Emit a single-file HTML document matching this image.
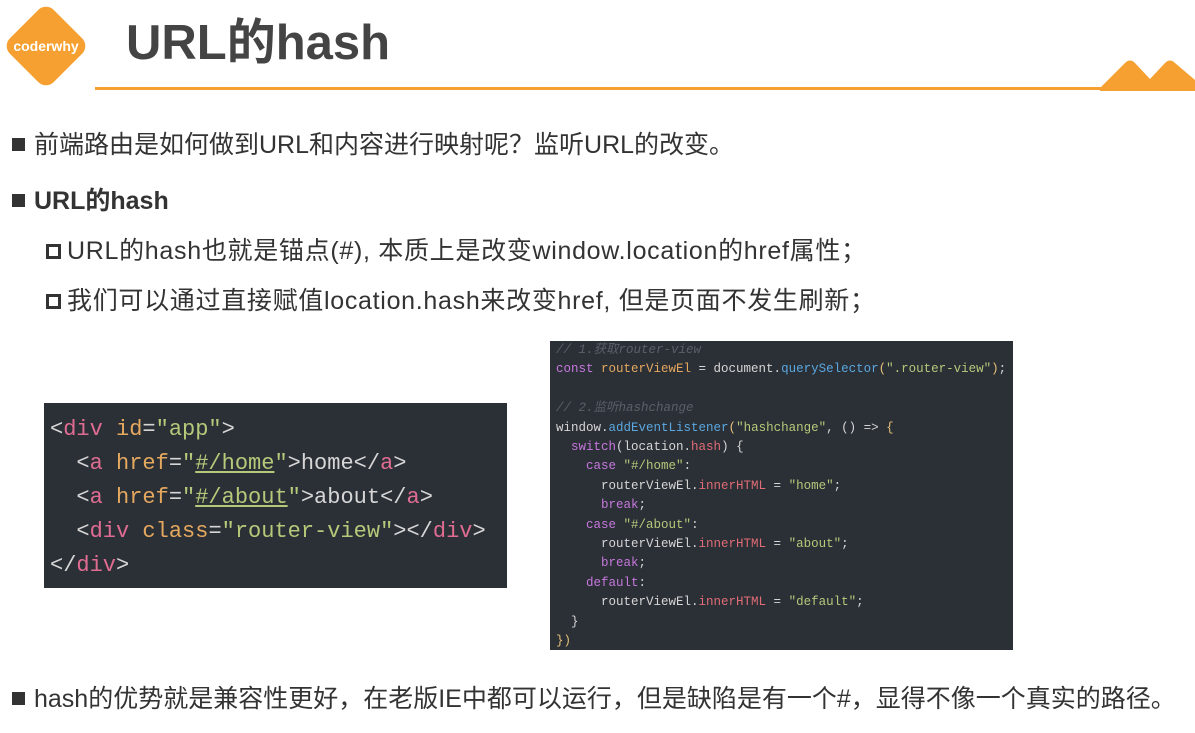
<!DOCTYPE html>
<html><head><meta charset="utf-8"><style>
*{margin:0;padding:0;box-sizing:border-box}
body{width:1195px;height:733px;background:#fff;position:relative;overflow:hidden;font-family:"Liberation Sans","Noto Sans CJK SC",sans-serif;color:#333}
.abs{position:absolute;white-space:nowrap}
.t{font-size:25px;line-height:28px}
.sq{display:inline-block;width:13px;height:13px;background:#333;margin-right:9px;vertical-align:2px}
.sq2{display:inline-block;width:15px;height:15px;border:3px solid #333;margin-right:6px;vertical-align:0px}
pre{font-family:"Liberation Mono","Noto Sans CJK SC",monospace;position:absolute;background:#2b2f36;color:#d6d6d6}
.k{color:#e06c92}.a{color:#e5a85f}.s{color:#b5c97a}.f{color:#5aa8e0}.c{color:#5b6068;font-style:italic}.p{color:#c678dd}.r{color:#e06c75}.y{color:#e5c07b}
</style></head><body>
<svg class="abs" style="left:0;top:0" width="95" height="95"><rect x="15" y="15" width="62" height="62" rx="11" transform="rotate(45 46 46)" fill="#f5a030"/><text x="46" y="51" font-family="Liberation Sans" font-weight="bold" font-size="14" fill="#fff" text-anchor="middle">coderwhy</text></svg>
<div class="abs" style="left:126px;top:11px;font-size:49px;font-weight:bold;color:#444;line-height:64px">URL的hash</div>
<div class="abs" style="left:95px;top:87px;width:1100px;height:3px;background:#f5a030"></div>
<svg class="abs" style="left:1095px;top:55px" width="100" height="36"><path d="M5 33 L30 8 Q35 3 40 8 L55 24 L70 8 Q75 3 80 8 L100 25 L100 36 L5 36Z" fill="#f5a030"/></svg>
<div class="abs t" style="left:12px;top:131px"><span class="sq"></span>前端路由是如何做到URL和内容进行映射呢？监听URL的改变。</div>
<div class="abs t" style="left:12px;top:187px;font-weight:bold"><span class="sq"></span>URL的hash</div>
<div class="abs t" style="left:46px;top:237px;letter-spacing:0.7px"><span class="sq2"></span>URL的hash也就是锚点(#), 本质上是改变window.location的href属性；</div>
<div class="abs t" style="left:46px;top:287px;letter-spacing:0.7px"><span class="sq2"></span>我们可以通过直接赋值location.hash来改变href, 但是页面不发生刷新；</div>
<pre style="left:44px;top:403px;width:463px;height:185px;font-size:22px;line-height:34px;padding:10px 0 0 6px">&lt;<span class="k">div</span> <span class="a">id</span>=<span class="s">"app"</span>&gt;
  &lt;<span class="k">a</span> <span class="a">href</span>=<span class="s">"<u>#/home</u>"</span>&gt;home&lt;/<span class="k">a</span>&gt;
  &lt;<span class="k">a</span> <span class="a">href</span>=<span class="s">"<u>#/about</u>"</span>&gt;about&lt;/<span class="k">a</span>&gt;
  &lt;<span class="k">div</span> <span class="a">class</span>=<span class="s">"router-view"</span>&gt;&lt;/<span class="k">div</span>&gt;
&lt;/<span class="k">div</span>&gt;</pre>
<pre style="left:550px;top:341px;width:463px;height:309px;font-size:12.5px;line-height:19.4px;padding:0 0 0 6px"><span class="c">// 1.获取router-view</span>
<span class="p">const</span> <span class="a">routerViewEl</span> = document.<span class="f">querySelector</span><span class="y">(</span><span class="s">".router-view"</span><span class="y">)</span>;

<span class="c">// 2.监听hashchange</span>
window.<span class="f">addEventListener</span><span class="y">(</span><span class="s">"hashchange"</span>, () =&gt; <span class="y">{</span>
  <span class="p">switch</span>(location.<span class="r">hash</span>) {
    <span class="p">case</span> <span class="s">"#/home"</span>:
      routerViewEl.<span class="r">innerHTML</span> = <span class="s">"home"</span>;
      <span class="p">break</span>;
    <span class="p">case</span> <span class="s">"#/about"</span>:
      routerViewEl.<span class="r">innerHTML</span> = <span class="s">"about"</span>;
      <span class="p">break</span>;
    <span class="p">default</span>:
      routerViewEl.<span class="r">innerHTML</span> = <span class="s">"default"</span>;
  }
<span class="y">})</span></pre>
<div class="abs t" style="left:12px;top:685px"><span class="sq"></span>hash的优势就是兼容性更好，在老版IE中都可以运行，但是缺陷是有一个#，显得不像一个真实的路径。</div>
</body></html>
